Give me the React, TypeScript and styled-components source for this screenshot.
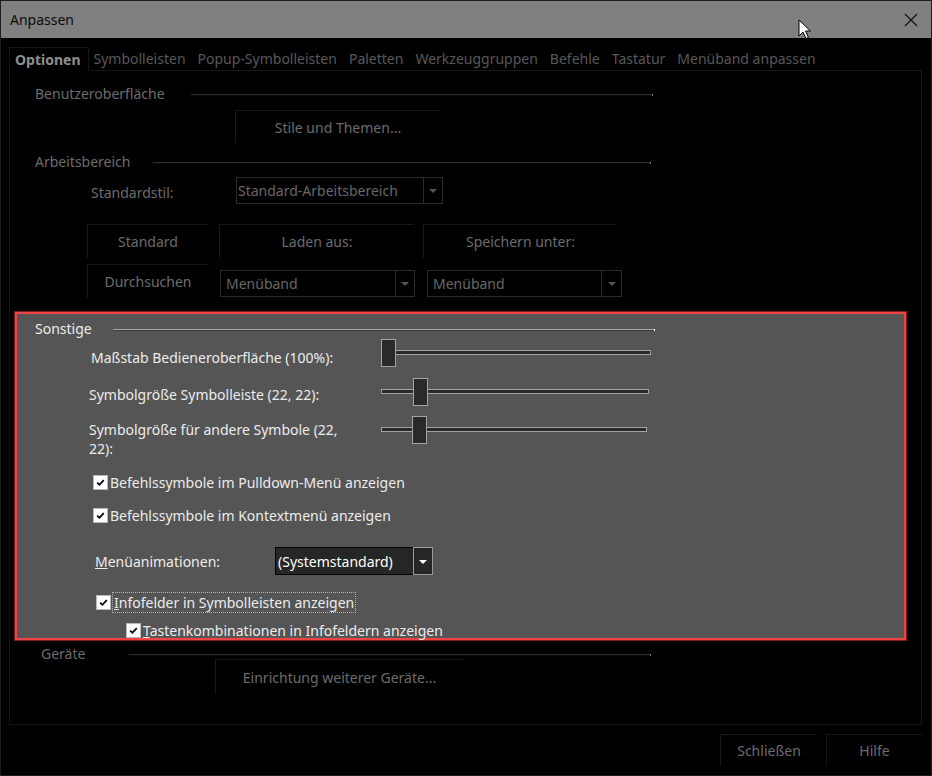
import React from "react";
import styled, { createGlobalStyle } from "styled-components";

const GlobalStyle = createGlobalStyle`
  html, body { margin: 0; padding: 0; background: #000; }
  body {
    font-family: "Noto Sans", "Open Sans", "DejaVu Sans", sans-serif;
    font-size: 14px;
  }
  * { box-sizing: border-box; }
`;

const DIM = "#6c6c6c";
const BRIGHT = "#ececec";

const Window = styled.div`
  position: relative;
  width: 932px;
  height: 776px;
  border: 1px solid #1d1d1d;
  background: #000;
  display: flex;
  flex-direction: column;
  overflow: hidden;
`;

const TitleBar = styled.div`
  height: 37px;
  flex: none;
  background: #808080;
  display: flex;
  align-items: center;
  justify-content: space-between;
  padding: 0 13px 0 9px;
  color: #0c0c0c;
  font-size: 14px;
`;

const CloseIcon = styled.svg`
  width: 14px;
  height: 14px;
`;

const Body = styled.div`
  flex: 1;
  min-height: 0;
  display: flex;
  flex-direction: column;
  padding: 9px 9px 9px 8px;
`;

const TabStrip = styled.div`
  display: flex;
  height: 24px;
  flex: none;
  position: relative;
  z-index: 1;
  margin-bottom: -1px;
`;

const Tab = styled.div<{ $active?: boolean }>`
  height: 24px;
  display: flex;
  align-items: center;
  padding: 0 7px 0 5px;
  color: ${(p) => (p.$active ? "#8e8e8e" : "#585858")};
  font-weight: ${(p) => (p.$active ? 700 : 400)};
  border: ${(p) => (p.$active ? "1px solid #171717" : "none")};
  border-bottom: 1px solid ${(p) => (p.$active ? "#000" : "transparent")};
  background: ${(p) => (p.$active ? "#000" : "transparent")};
  white-space: nowrap;
`;

const Panel = styled.div`
  flex: 1;
  min-height: 0;
  border: 1px solid #151515;
  display: flex;
  flex-direction: column;
`;

const Legend = styled.div<{ $indent: number; $end: number; $mt: number; $bright?: boolean }>`
  display: flex;
  align-items: center;
  height: 16px;
  flex: none;
  margin-top: ${(p) => p.$mt}px;
  padding-left: ${(p) => p.$indent}px;
  width: ${(p) => p.$end}px;
  color: ${(p) => (p.$bright ? BRIGHT : DIM)};
`;

const LegendText = styled.span<{ $w: number }>`
  width: ${(p) => p.$w}px;
  flex: none;
  white-space: nowrap;
`;

const Rule = styled.span<{ $bright?: boolean }>`
  flex: 1;
  height: 2px;
  margin-top: 3px;
  position: relative;
  border-top: 1px solid ${(p) => (p.$bright ? "#a8a8a8" : "#2e2e2e")};
  border-bottom: 1px solid ${(p) => (p.$bright ? "#3c3c3c" : "#080808")};
  &::after {
    content: "";
    position: absolute;
    right: -1px;
    top: -1px;
    width: 1px;
    height: 2px;
    background: ${(p) => (p.$bright ? "#ffffff" : "#7a7a7a")};
  }
`;

const FlatButton = styled.div<{ $w: number; $h: number; $ml?: number; $mt?: number }>`
  width: ${(p) => p.$w}px;
  height: ${(p) => p.$h}px;
  flex: none;
  margin-left: ${(p) => p.$ml ?? 0}px;
  margin-top: ${(p) => p.$mt ?? 0}px;
  display: flex;
  align-items: center;
  justify-content: center;
  border-top: 1px solid #181818;
  border-left: 1px solid #181818;
  color: ${DIM};
  white-space: nowrap;
`;

const FieldRow = styled.div<{ $mt: number; $indent: number; $bright?: boolean }>`
  display: flex;
  align-items: center;
  flex: none;
  margin-top: ${(p) => p.$mt}px;
  padding-left: ${(p) => p.$indent}px;
  color: ${(p) => (p.$bright ? BRIGHT : DIM)};
`;

const FieldLabel = styled.span<{ $w: number; $pt?: number }>`
  width: ${(p) => p.$w}px;
  padding-top: ${(p) => p.$pt ?? 0}px;
  flex: none;
  white-space: nowrap;
`;

const Combo = styled.div<{ $w: number; $h: number; $ml?: number; $mt?: number; $bright?: boolean }>`
  display: flex;
  width: ${(p) => p.$w}px;
  height: ${(p) => p.$h}px;
  flex: none;
  margin-left: ${(p) => p.$ml ?? 0}px;
  margin-top: ${(p) => p.$mt ?? 0}px;
  color: ${(p) => (p.$bright ? "#ffffff" : "#676767")};
`;

const ComboField = styled.div<{ $bright?: boolean; $pad: number }>`
  flex: 1;
  display: flex;
  align-items: center;
  padding-left: ${(p) => p.$pad}px;
  border: 1px solid ${(p) => (p.$bright ? "#000" : "#2b2b2b")};
  background: ${(p) => (p.$bright ? "#262626" : "transparent")};
  white-space: nowrap;
  overflow: hidden;
`;

const ComboButton = styled.div<{ $w: number; $bright?: boolean }>`
  width: ${(p) => p.$w}px;
  flex: none;
  margin-left: -1px;
  display: flex;
  align-items: center;
  justify-content: center;
  border: 1px solid ${(p) => (p.$bright ? "#9a9a9a" : "#2b2b2b")};
  background: ${(p) => (p.$bright ? "#262626" : "transparent")};
`;

const Arrow = styled.span<{ $bright?: boolean }>`
  width: 0;
  height: 0;
  border-left: 4px solid transparent;
  border-right: 4px solid transparent;
  border-top: 4px solid ${(p) => (p.$bright ? "#ffffff" : "#555555")};
  margin-top: 1px;
`;

const BoxRow = styled.div<{ $mt: number }>`
  display: flex;
  align-items: flex-start;
  flex: none;
  margin-top: ${(p) => p.$mt}px;
  padding-left: 77px;
`;

const Highlight = styled.div`
  margin: 14px 0 0 5px;
  width: 891px;
  height: 328px;
  flex: none;
  background: #555555;
  border: 2px solid #f04444;
  box-shadow: 0 0 0 1px #7c1818;
  display: flex;
  flex-direction: column;
  color: ${BRIGHT};
`;

const SliderRow = styled.div<{ $mt: number }>`
  display: grid;
  grid-template-columns: 292px auto;
  align-items: start;
  margin-top: ${(p) => p.$mt}px;
  padding-left: 72px;
  flex: none;
`;

const SliderLabel = styled.div<{ $pt: number; $pl: number }>`
  padding-top: ${(p) => p.$pt}px;
  padding-left: ${(p) => p.$pl}px;
  line-height: 19px;
  max-width: 272px;
`;

const Slider = styled.div<{ $w: number }>`
  position: relative;
  width: ${(p) => p.$w}px;
  height: 28px;
`;

const Track = styled.div`
  position: absolute;
  left: 0;
  right: 0;
  top: 11px;
  height: 5px;
  background: #2a2a2a;
  border: 1px solid #a3a3a3;
`;

const Thumb = styled.div`
  position: absolute;
  top: 0;
  width: 15px;
  height: 28px;
  background: #2a2a2a;
  border: 1px solid #a3a3a3;
`;

const CheckRow = styled.div<{ $mt: number; $indent: number; $h?: number }>`
  display: flex;
  align-items: center;
  height: ${(p) => p.$h ?? 20}px;
  flex: none;
  margin-top: ${(p) => p.$mt}px;
  padding-left: ${(p) => p.$indent}px;
  white-space: nowrap;
`;

const Box = styled.span<{ $gap: number }>`
  width: 15px;
  height: 15px;
  flex: none;
  margin-right: ${(p) => p.$gap}px;
  border: 1px solid #b8b8b8;
  background: #ffffff;
  display: flex;
  align-items: center;
  justify-content: center;
`;

const FocusText = styled.span`
  height: 21px;
  display: flex;
  align-items: center;
  padding: 0 1px;
  border: 1px dotted #b4b4b4;
`;

const Footer = styled.div`
  display: flex;
  justify-content: flex-end;
  gap: 9px;
  margin-top: 9px;
  flex: none;
`;

const Pointer = styled.svg`
  position: absolute;
  left: 797px;
  top: 18px;
  width: 13px;
  height: 21px;
`;

const Check = () => (
  <svg width="11" height="11" viewBox="0 0 11 11">
    <path d="M2.2 5.6 L4.4 7.8 L8.8 3.2" fill="none" stroke="#000" strokeWidth="1.8" />
  </svg>
);

type CheckProps = { $mt: number; $indent: number; gap?: number; children: React.ReactNode };

const CheckItem = ({ $mt, $indent, gap = 2, children }: CheckProps) => (
  <CheckRow $mt={$mt} $indent={$indent}>
    <Box $gap={gap}>
      <Check />
    </Box>
    {children}
  </CheckRow>
);

const tabs = [
  "Symbolleisten",
  "Popup-Symbolleisten",
  "Paletten",
  "Werkzeuggruppen",
  "Befehle",
  "Tastatur",
  "Menüband anpassen",
];

const sliders = [
  { label: "Maßstab Bedieneroberfläche (100%):", mt: 3, pt: 9, pl: 2, w: 270, pos: 0 },
  { label: "Symbolgröße Symbolleiste (22, 22):", mt: 11, pt: 7, pl: 0, w: 268, pos: 32 },
  { label: "Symbolgröße für andere Symbole (22, 22):", mt: 10, pt: 4, pl: 0, w: 266, pos: 31 },
];

export default function App() {
  return (
    <>
      <GlobalStyle />
      <Window>
        <TitleBar>
          <span>Anpassen</span>
          <CloseIcon viewBox="0 0 14 14">
            <path d="M1 1 L13 13 M13 1 L1 13" stroke="#141414" strokeWidth="1.3" />
          </CloseIcon>
        </TitleBar>
        <Body>
          <TabStrip>
            <Tab $active>Optionen</Tab>
            {tabs.map((t) => (
              <Tab key={t}>{t}</Tab>
            ))}
          </TabStrip>
          <Panel>
            <Legend $indent={25} $end={642} $mt={14}>
              <LegendText $w={156}>Benutzeroberfläche</LegendText>
              <Rule />
            </Legend>
            <FlatButton $w={205} $h={33} $ml={225} $mt={9}>
              Stile und Themen...
            </FlatButton>

            <Legend $indent={25} $end={640} $mt={10}>
              <LegendText $w={118}>Arbeitsbereich</LegendText>
              <Rule />
            </Legend>
            <FieldRow $mt={8} $indent={81}>
              <FieldLabel $w={145} $pt={3}>Standardstil:</FieldLabel>
              <Combo $w={207} $h={27}>
                <ComboField $pad={1}>Standard-Arbeitsbereich</ComboField>
                <ComboButton $w={20}>
                  <Arrow />
                </ComboButton>
              </Combo>
            </FieldRow>
            <BoxRow $mt={20}>
              <FlatButton $w={121} $h={34}>Standard</FlatButton>
              <FlatButton $w={195} $h={34} $ml={11}>Laden aus:</FlatButton>
              <FlatButton $w={194} $h={34} $ml={9}>Speichern unter:</FlatButton>
            </BoxRow>
            <BoxRow $mt={6}>
              <FlatButton $w={121} $h={34}>Durchsuchen</FlatButton>
              <Combo $w={195} $h={27} $ml={12} $mt={6}>
                <ComboField $pad={5}>Menüband</ComboField>
                <ComboButton $w={20}>
                  <Arrow />
                </ComboButton>
              </Combo>
              <Combo $w={195} $h={27} $ml={12} $mt={6}>
                <ComboField $pad={5}>Menüband</ComboField>
                <ComboButton $w={21}>
                  <Arrow />
                </ComboButton>
              </Combo>
            </BoxRow>

            <Highlight>
              <Legend $indent={18} $end={637} $mt={6} $bright>
                <LegendText $w={78}>Sonstige</LegendText>
                <Rule $bright />
              </Legend>
              {sliders.map((s) => (
                <SliderRow key={s.label} $mt={s.mt}>
                  <SliderLabel $pt={s.pt} $pl={s.pl}>{s.label}</SliderLabel>
                  <Slider $w={s.w}>
                    <Track />
                    <Thumb style={{ left: s.pos }} />
                  </Slider>
                </SliderRow>
              ))}
              <CheckItem $mt={14} $indent={76}>
                Befehlssymbole im Pulldown-Menü anzeigen
              </CheckItem>
              <CheckItem $mt={13} $indent={76}>
                Befehlssymbole im Kontextmenü anzeigen
              </CheckItem>
              <FieldRow $mt={22} $indent={78} $bright>
                <FieldLabel $w={180}>
                  <u>M</u>enüanimationen:
                </FieldLabel>
                <Combo $w={158} $h={28} $bright>
                  <ComboField $pad={2} $bright>(Systemstandard)</ComboField>
                  <ComboButton $w={20} $bright>
                    <Arrow $bright />
                  </ComboButton>
                </Combo>
              </FieldRow>
              <CheckItem $mt={17} $indent={79} gap={1}>
                <FocusText>
                  <u>I</u>nfofelder in Symbolleisten anzeigen
                </FocusText>
              </CheckItem>
              <CheckItem $mt={8} $indent={109}>
                <span>
                  <u>T</u>astenkombinationen in Infofeldern anzeigen
                </span>
              </CheckItem>
            </Highlight>

            <Legend $indent={31} $end={640} $mt={5}>
              <LegendText $w={88}>Geräte</LegendText>
              <Rule />
            </Legend>
            <FlatButton $w={248} $h={35} $ml={205} $mt={-2}>
              Einrichtung weiterer Geräte...
            </FlatButton>
          </Panel>
          <Footer>
            <FlatButton $w={97} $h={32}>Schließen</FlatButton>
            <FlatButton $w={96} $h={32}>Hilfe</FlatButton>
          </Footer>
        </Body>
        <Pointer viewBox="0 0 13 21">
          <path
            d="M1 1 L1 17 L5 13 L8 19.5 L10.5 18.5 L7.5 12 L12.5 12 Z"
            fill="#fff"
            stroke="#000"
            strokeWidth="1"
            strokeLinejoin="round"
          />
        </Pointer>
      </Window>
    </>
  );
}
